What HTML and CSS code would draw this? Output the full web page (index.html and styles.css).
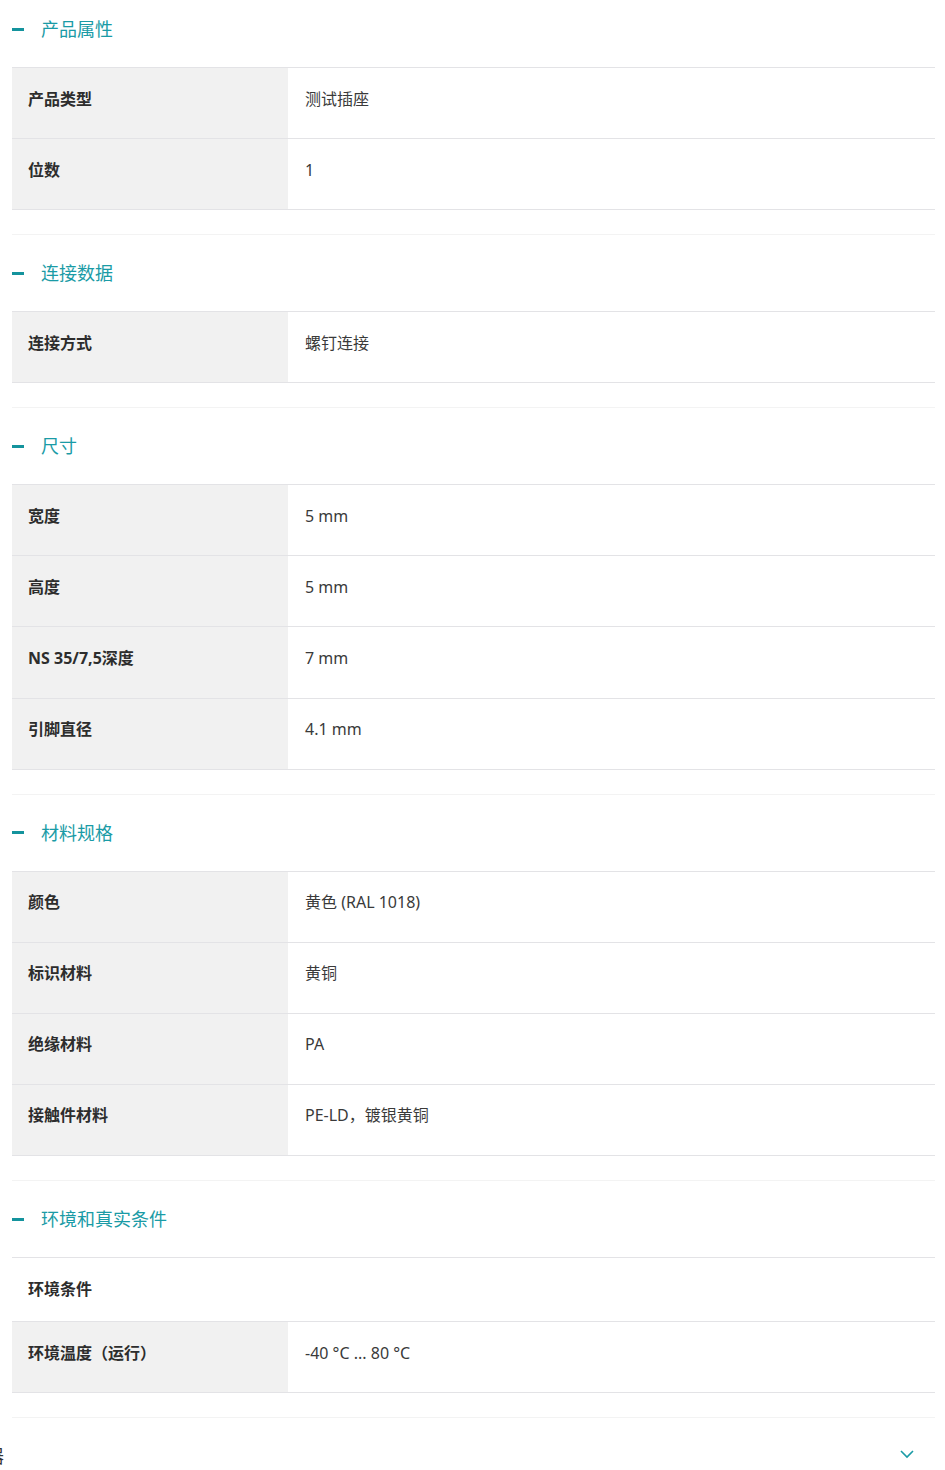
FILE: index.html
```html
<!DOCTYPE html>
<html lang="zh-CN">
<head>
    <meta charset="UTF-8">
    <meta name="viewport" content="width=device-width, initial-scale=1.0">
    <title>技术数据</title>
    <link rel="stylesheet" href="styles.css">
</head>
<body>
    <div class="specs">

        <div class="section">
            <div class="head"><span class="dash"></span><h2>产品属性</h2></div>
            <div class="table">
                <div class="row"><div class="label">产品类型</div><div class="value">测试插座</div></div>
                <div class="row"><div class="label">位数</div><div class="value">1</div></div>
            </div>
        </div>

        <div class="section">
            <div class="head"><span class="dash"></span><h2>连接数据</h2></div>
            <div class="table">
                <div class="row"><div class="label">连接方式</div><div class="value">螺钉连接</div></div>
            </div>
        </div>

        <div class="section">
            <div class="head"><span class="dash"></span><h2>尺寸</h2></div>
            <div class="table">
                <div class="row"><div class="label">宽度</div><div class="value">5 mm</div></div>
                <div class="row"><div class="label">高度</div><div class="value">5 mm</div></div>
                <div class="row"><div class="label">NS 35/7,5深度</div><div class="value">7 mm</div></div>
                <div class="row"><div class="label">引脚直径</div><div class="value">4.1 mm</div></div>
            </div>
        </div>

        <div class="section">
            <div class="head"><span class="dash"></span><h2>材料规格</h2></div>
            <div class="table">
                <div class="row"><div class="label">颜色</div><div class="value">黄色 (RAL 1018)</div></div>
                <div class="row"><div class="label">标识材料</div><div class="value">黄铜</div></div>
                <div class="row"><div class="label">绝缘材料</div><div class="value">PA</div></div>
                <div class="row"><div class="label">接触件材料</div><div class="value">PE-LD，镀银黄铜</div></div>
            </div>
        </div>

        <div class="section">
            <div class="head"><span class="dash"></span><h2>环境和真实条件</h2></div>
            <div class="table">
                <div class="row sub"><div class="label">环境条件</div></div>
                <div class="row"><div class="label">环境温度（运行）</div><div class="value">-40 °C ... 80 °C</div></div>
            </div>
        </div>

        <!-- collapsed section, title is scrolled off to the left -->
        <div class="section closed">
            <div class="head">
                <div class="cut"><h2>连接器</h2></div>
                <svg class="chev" width="16" height="10" viewBox="0 0 16 10">
                    <path d="M2 2 L8 8 L14 2" fill="none" stroke="#1a9ba6" stroke-width="1.6"/>
                </svg>
            </div>
        </div>

    </div>
</body>
</html>
```

FILE: styles.css
```css
body{
    margin: 0;
    background: #fff;
    color: #333;
    font-family: "Noto Sans", "Noto Sans CJK SC", sans-serif;
    overflow: hidden;
}
.specs{
    margin-top: -9px;
    padding: 0 10px 0 12px;
}
.section{
    padding: 21px 0 24px;
    border-bottom: 1px solid #f3f3f3;
}
.head{
    display: flex;
    align-items: center;
    height: 34px;
}
.dash{
    width: 12px;
    height: 3px;
    background: #14939d;
    margin-right: 17px;
}
h2{
    margin: 0;
    font-size: 18px;
    line-height: 24px;
    font-weight: 400;
    color: #1a9ba6;
    white-space: nowrap;
}
.table{
    margin-top: 21px;
    border-top: 1px solid #e3e3e6;
}
.row{
    display: flex;
    height: 70.1px;
    border-bottom: 1px solid #e3e3e6;
}
.label{
    width: 276px;
    flex-shrink: 0;
    box-sizing: border-box;
    padding: 0 0 9px 16px;
    background: #f1f1f1;
    display: flex;
    align-items: center;
    font-size: 16px;
    line-height: 22px;
    font-weight: 700;
    color: #2d2d2d;
}
.value{
    flex: 1;
    padding: 0 0 9px 17px;
    display: flex;
    align-items: center;
    font-size: 16px;
    line-height: 22px;
    color: #3a3a3a;
}
.row.sub{
    height: 63px;
}
.row.sub .label{
    background: none;
    padding-bottom: 2px;
}
.closed{
    border-bottom: none;
}
.closed .head{
    justify-content: space-between;
    margin-left: -12px;
}
.cut{
    width: 4px;
    display: flex;
    justify-content: flex-end;
}
.cut h2{
    color: #333;
}
.chev{
    margin: 0 20px 4px 0;
}
```
